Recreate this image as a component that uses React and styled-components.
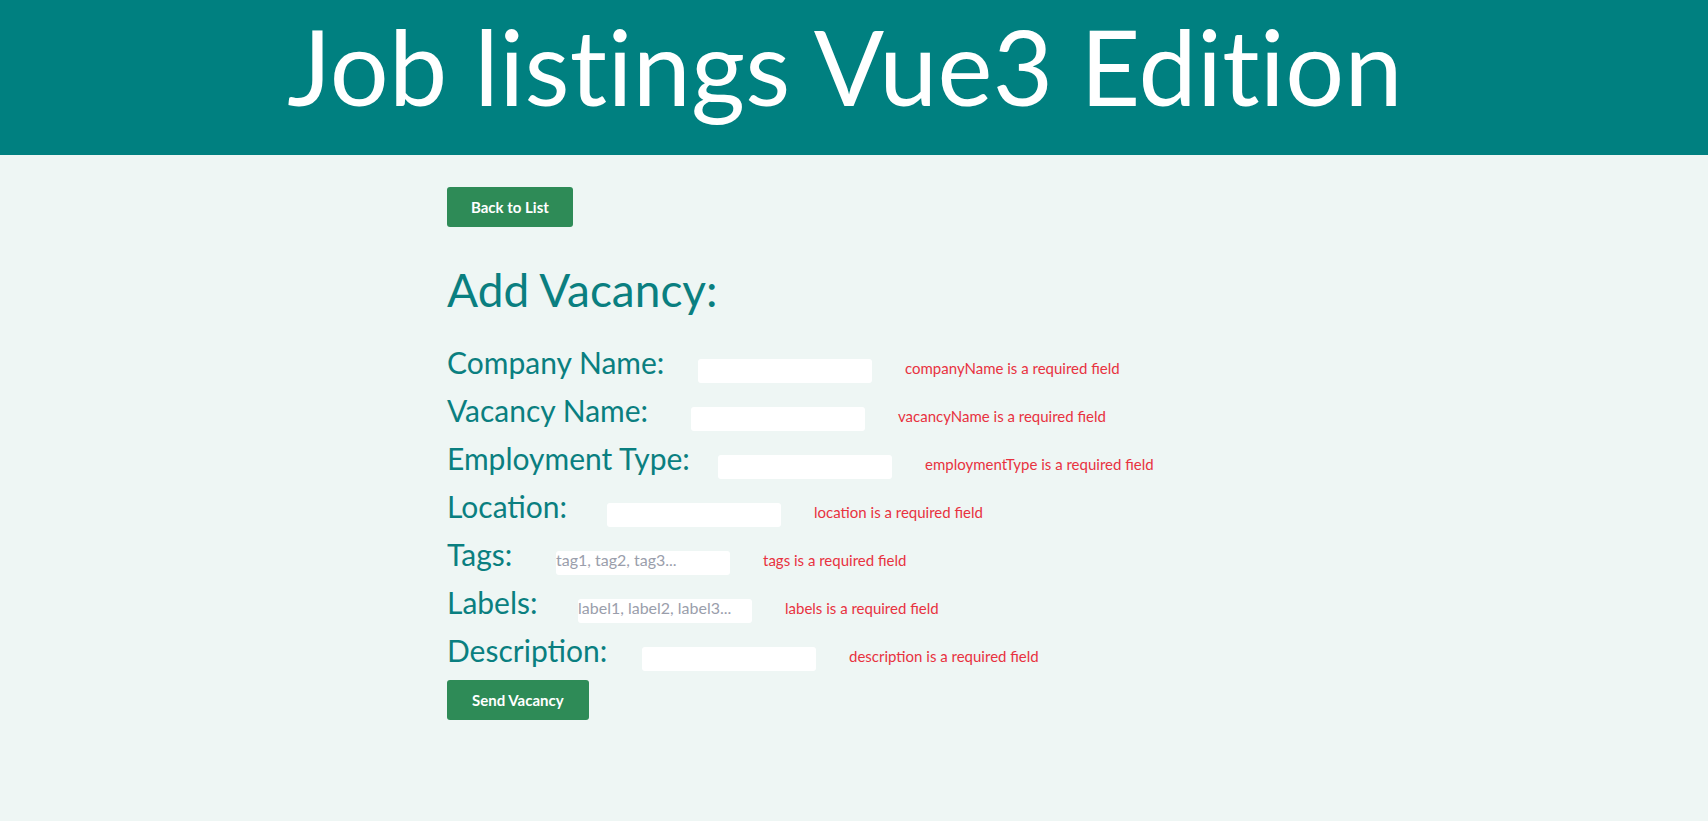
import React from 'react';
import styled, { createGlobalStyle } from 'styled-components';

const GlobalStyle = createGlobalStyle`
  html, body {
    margin: 0;
    padding: 0;
    background: #eef6f4;
    font-family: 'Lato', 'Noto Sans', sans-serif;
  }
`;

const Header = styled.header`
  height: 155px;
  box-sizing: border-box;
  padding: 14px 18px 0 0;
  background: #008080;
  text-align: center;
`;

const Title = styled.h1`
  margin: 0;
  font-size: 104px;
  line-height: 104px;
  font-weight: 400;
  letter-spacing: 0.3px;
  color: #ffffff;
`;

const Main = styled.main`
  width: 814px;
  margin: 0 auto;
  padding-top: 32px;
`;

const Button = styled.button`
  height: 40px;
  padding: 0 ${(p) => p.$padX || 24}px;
  border: none;
  border-radius: 3px;
  background: #2e8b57;
  color: #ffffff;
  font-family: 'Lato', sans-serif;
  font-weight: 700;
  font-size: 15px;
  cursor: pointer;
  align-self: flex-start;
`;

const Heading = styled.h2`
  margin: 35px 0 27px;
  font-size: 46px;
  font-weight: 400;
  line-height: normal;
  color: #0a7f80;
`;

const Form = styled.form`
  display: flex;
  flex-direction: column;
  gap: 8px;
`;

const Row = styled.div`
  display: flex;
  align-items: baseline;
  height: 40px;
`;

const Label = styled.label`
  width: ${(p) => p.$w}px;
  flex-shrink: 0;
  font-size: 30px;
  color: #0a7f80;
`;

const Input = styled.input`
  width: 174px;
  height: 24px;
  box-sizing: border-box;
  padding: 0 0 6px;
  border: none;
  border-radius: 3px;
  background: #ffffff;
  font-family: 'Lato', sans-serif;
  font-size: 16px;
  color: #333;
  outline: none;

  &::placeholder {
    color: #9a9eab;
  }
`;

const Error = styled.span`
  margin-left: 33px;
  font-size: 15px;
  color: #e8323f;
`;

const fields = [
  { label: 'Company Name:', key: 'companyName', w: 251 },
  { label: 'Vacancy Name:', key: 'vacancyName', w: 244 },
  { label: 'Employment Type:', key: 'employmentType', w: 271 },
  { label: 'Location:', key: 'location', w: 160 },
  { label: 'Tags:', key: 'tags', w: 109, placeholder: 'tag1, tag2, tag3...' },
  { label: 'Labels:', key: 'labels', w: 131, placeholder: 'label1, label2, label3...' },
  { label: 'Description:', key: 'description', w: 195 },
];

export default function App() {
  return (
    <>
      <GlobalStyle />
      <Header>
        <Title>Job listings Vue3 Edition</Title>
      </Header>
      <Main>
        <Button type="button">Back to List</Button>
        <Heading>Add Vacancy:</Heading>
        <Form onSubmit={(e) => e.preventDefault()}>
          {fields.map((f) => (
            <Row key={f.key}>
              <Label $w={f.w} htmlFor={f.key}>{f.label}</Label>
              <Input id={f.key} placeholder={f.placeholder || ''} />
              <Error>{f.key} is a required field</Error>
            </Row>
          ))}
          <Button type="submit" $padX={25}>Send Vacancy</Button>
        </Form>
      </Main>
    </>
  );
}
